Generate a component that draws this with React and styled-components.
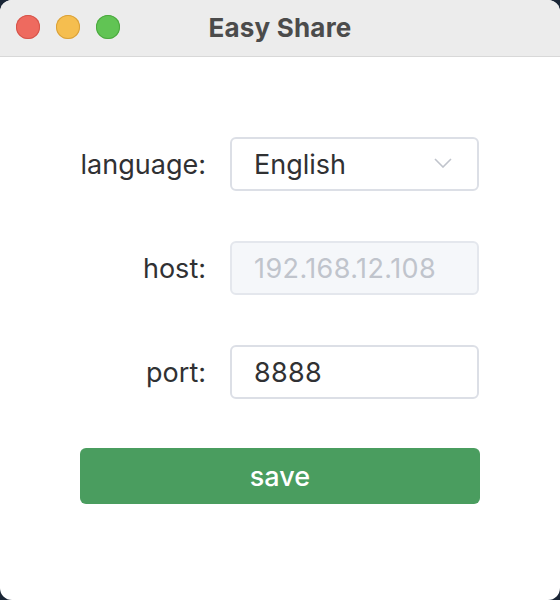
import React, { useState } from "react";
import styled, { createGlobalStyle } from "styled-components";

const GlobalStyle = createGlobalStyle`
  html, body {
    margin: 0;
    padding: 0;
    background: #1a2636;
  }
  * {
    box-sizing: border-box;
  }
`;

const Window = styled.div`
  width: 560px;
  height: 600px;
  background: #fff;
  border-radius: 12px;
  overflow: hidden;
  display: flex;
  flex-direction: column;
  font-family: Inter, "Noto Sans", sans-serif;
`;

const TitleBar = styled.div`
  position: relative;
  height: 57px;
  flex-shrink: 0;
  background: #ececec;
  border-bottom: 1px solid #d8d8d8;
  display: flex;
  align-items: center;
  justify-content: center;
`;

const Lights = styled.div`
  position: absolute;
  left: 16px;
  top: 15px;
  display: flex;
  gap: 16px;
`;

const Light = styled.span`
  width: 24px;
  height: 24px;
  border-radius: 50%;
  background: ${(p) => p.color};
  box-shadow: inset 0 0 0 1px ${(p) => p.edge};
`;

const Title = styled.h1`
  margin: 0;
  margin-top: -2px;
  font-size: 26px;
  font-weight: 700;
  color: #4b4b4b;
  letter-spacing: 0.2px;
`;

const Form = styled.form`
  width: 400px;
  margin: 80px auto 0;
  display: flex;
  flex-direction: column;
  gap: 50px;
`;

const Row = styled.div`
  display: flex;
  align-items: center;
  height: 54px;
`;

const Label = styled.label`
  width: 150px;
  padding-right: 24px;
  text-align: right;
  font-size: 27px;
  color: #303133;
`;

const Field = styled.div`
  position: relative;
  width: 249px;
  height: 54px;
  display: flex;
  align-items: center;
  padding: 0 22px;
  border: 2px solid ${(p) => (p.disabled ? "#e4e7ed" : "#dcdfe6")};
  border-radius: 6px;
  background: ${(p) => (p.disabled ? "#f5f7fa" : "#fff")};
  font-size: 27px;
  letter-spacing: ${(p) => (p.disabled ? "0.4px" : "0")};
  color: ${(p) => (p.disabled ? "#c0c4cc" : "#303133")};
`;

const Input = styled.input`
  width: 100%;
  border: none;
  outline: none;
  padding: 0;
  background: transparent;
  font: inherit;
  letter-spacing: 0.3px;
  color: inherit;
`;

const Chevron = styled.svg`
  position: absolute;
  right: 25px;
  top: 19px;
`;

const SaveButton = styled.button`
  margin-top: -1px;
  height: 56px;
  border: none;
  border-radius: 6px;
  background: #4a9d5f;
  color: #fff;
  font-family: inherit;
  font-size: 27px;
  font-weight: 500;
  cursor: pointer;
`;

export default function App() {
  const [port, setPort] = useState("8888");

  return (
    <>
      <GlobalStyle />
      <Window>
        <TitleBar>
          <Lights>
            <Light color="#ee6a5f" edge="#d5554b" />
            <Light color="#f5be4f" edge="#d9a13a" />
            <Light color="#61c454" edge="#4ca83f" />
          </Lights>
          <Title>Easy Share</Title>
        </TitleBar>
        <Form onSubmit={(e) => e.preventDefault()}>
          <Row>
            <Label>language:</Label>
            <Field>
              English
              <Chevron width="18" height="10" viewBox="0 0 18 10">
                <path d="M1 1 L9 9 L17 1" fill="none" stroke="#c0c4cc" strokeWidth="1.6" />
              </Chevron>
            </Field>
          </Row>
          <Row>
            <Label>host:</Label>
            <Field disabled>192.168.12.108</Field>
          </Row>
          <Row>
            <Label>port:</Label>
            <Field>
              <Input value={port} onChange={(e) => setPort(e.target.value)} />
            </Field>
          </Row>
          <SaveButton type="submit">save</SaveButton>
        </Form>
      </Window>
    </>
  );
}
